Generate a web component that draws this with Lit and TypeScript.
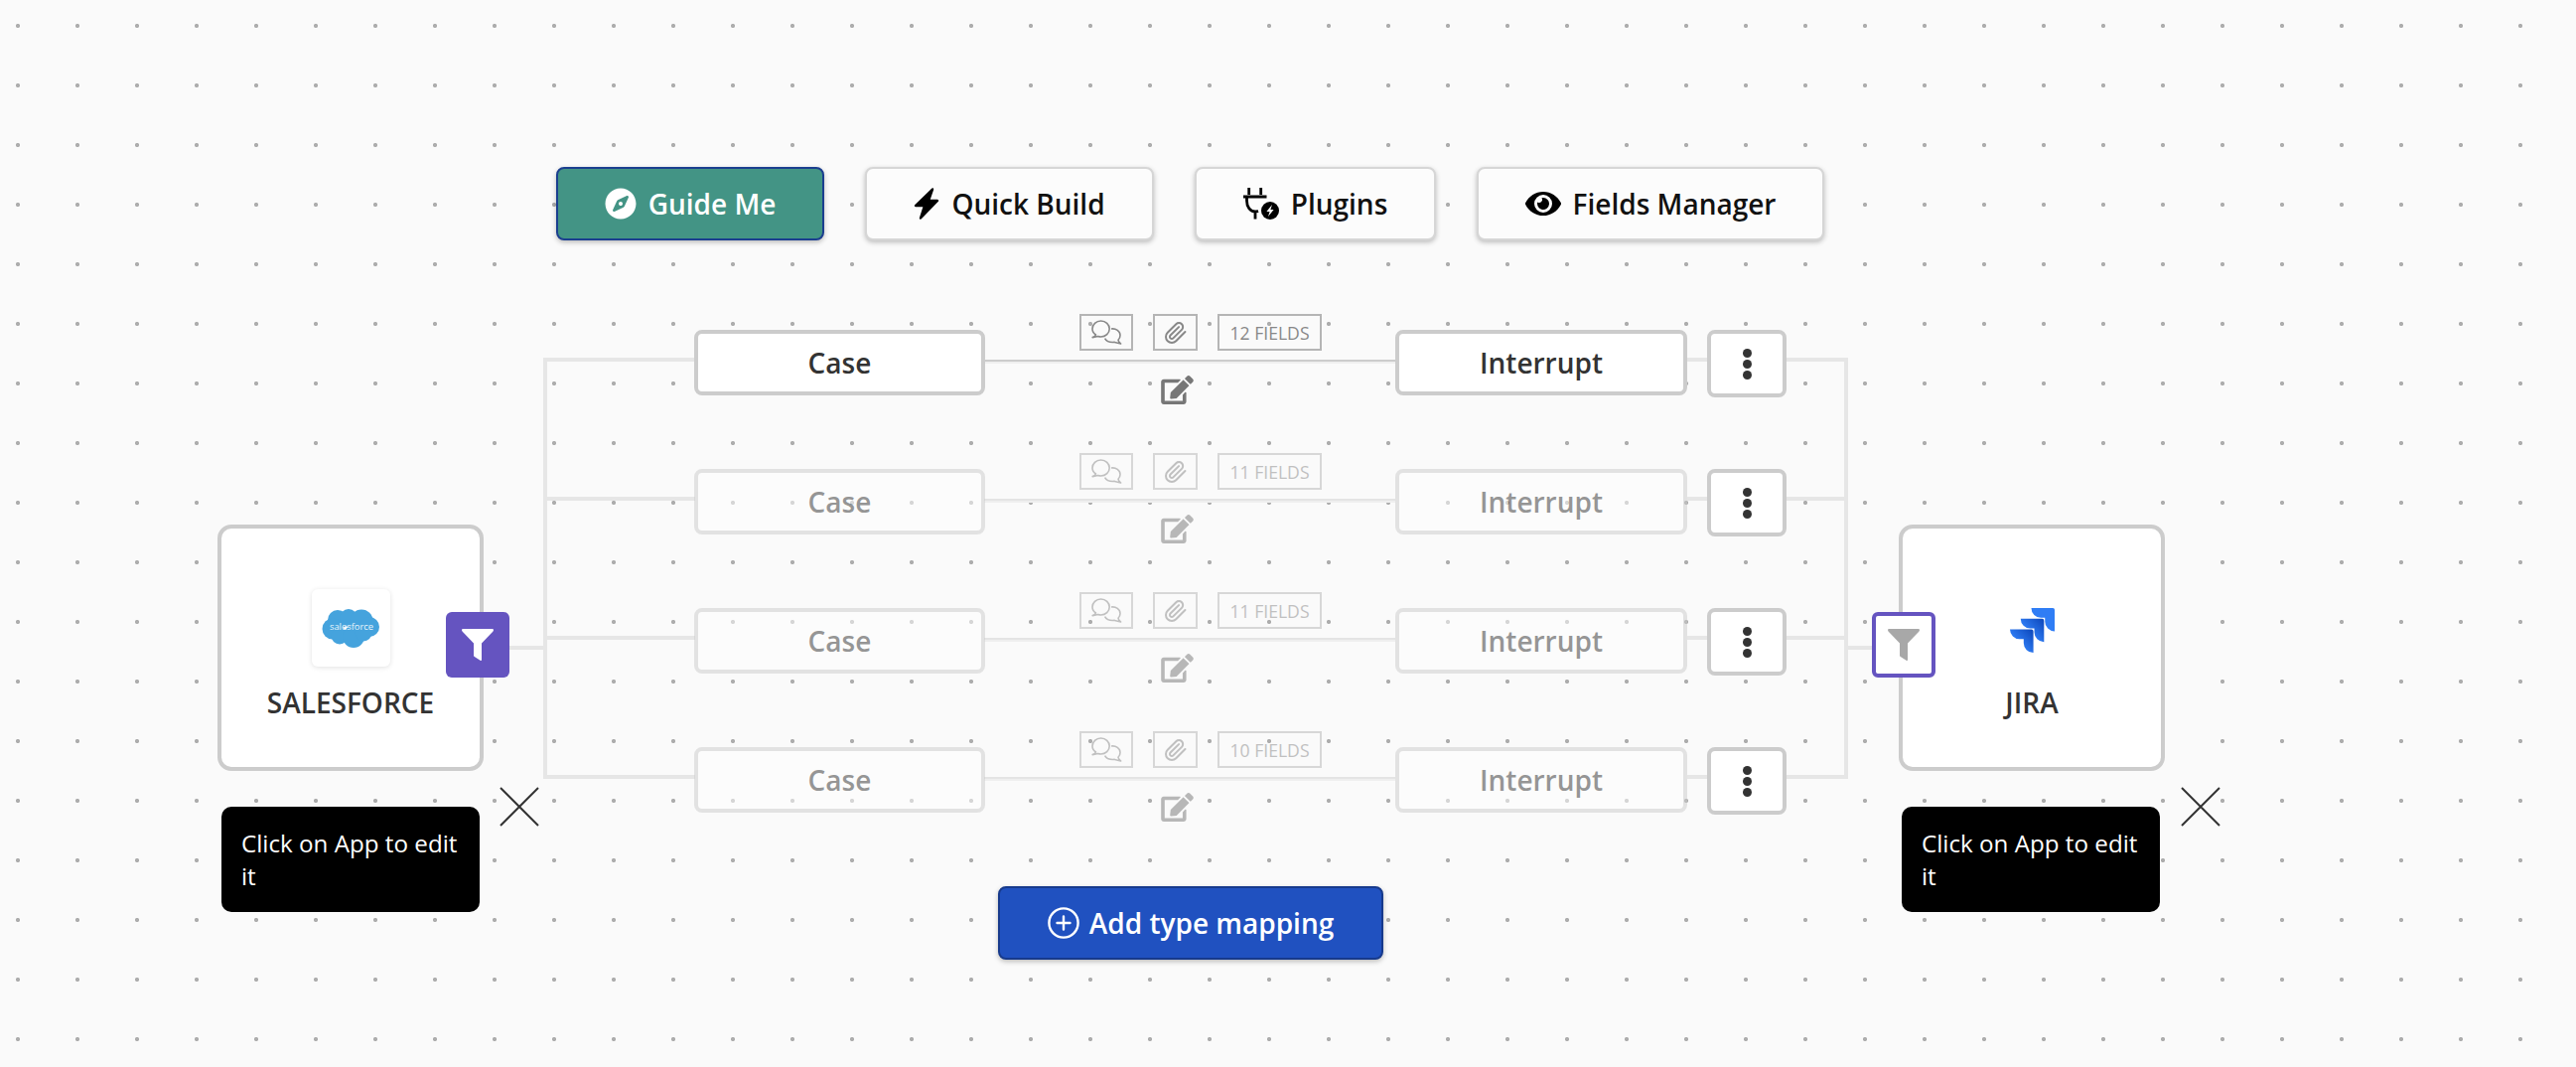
import { LitElement, html, css, svg } from "lit";
import { customElement } from "lit/decorators.js";

const rowsData = [
  { fields: 12, on: true },
  { fields: 11, on: false },
  { fields: 11, on: false },
  { fields: 10, on: false },
];
const ROW_TOP = 362;
const PITCH = 140;

const funnel = html`<svg class="funnel" viewBox="0 0 32 32"><path d="M1.5 0H30.5C32 0 32.4 1.4 31.5 2.4L20 14.5V31C20 32 19.4 32.2 18.6 31.8L12.8 28C12.2 27.6 12 27 12 26.4V14.5L.5 2.4C-.4 1.4 0 0 1.5 0Z" fill="currentColor"/></svg>`;
const cross = html`<svg class="cross" viewBox="0 0 40 40"><path d="M1 1L39 39M39 1L1 39" stroke="#333" stroke-width="2" fill="none"/></svg>`;
const chat = html`<svg class="chat" viewBox="0 0 31 25" fill="none" stroke="currentColor" stroke-width="1.6" stroke-linejoin="round"><path d="M4.5 15C2.2 13.5 1 11.4 1 9C1 4.6 4.8 1 9.6 1S18.2 4.6 18.2 9S14.4 17 9.6 17C8.6 17 7.6 16.8 6.6 16.5L1.2 17.6C2.8 17 4 16 4.5 15Z"/><path d="M20 9C24.6 8.4 29 11 29 15.4C29 17.4 28.2 19 27 20.2C27.2 21.6 28 23 29.6 24L23.4 22.4C20 22.8 15.5 22 13.6 18.6"/></svg>`;
const clip = html`<svg class="clip" viewBox="0 0 24 24" fill="none" stroke="currentColor" stroke-width="2" stroke-linecap="round" stroke-linejoin="round"><path d="m21.44 11.05-9.19 9.19a6 6 0 0 1-8.49-8.49l8.57-8.57A4 4 0 1 1 18 8.84l-8.59 8.57a2 2 0 0 1-2.83-2.83l8.49-8.48"/></svg>`;
const edit = html`<svg class="edit" viewBox="0 0 576 512"><path fill="currentColor" d="M402.6 83.2l90.2 90.2c3.8 3.8 3.8 10 0 13.8L274.4 405.6l-92.8 10.3c-12.4 1.4-22.9-9.1-21.5-21.5l10.3-92.8L388.8 83.2c3.8-3.8 10-3.8 13.8 0zm162-22.9l-48.8-48.8c-15.2-15.2-39.9-15.2-55.2 0l-35.4 35.4c-3.8 3.8-3.8 10 0 13.8l90.2 90.2c3.8 3.8 10 3.8 13.8 0l35.4-35.4c15.2-15.3 15.2-40 0-55.2zM384 346.2V448H64V128h229.8c3.2 0 6.2-1.3 8.5-3.5l40-40c7.6-7.6 2.2-20.5-8.5-20.5H48C21.5 64 0 85.5 0 112v352c0 26.5 21.5 48 48 48h352c26.5 0 48-21.5 48-48V306.2c0-10.7-12.9-16-20.5-8.5l-40 40c-2.2 2.3-3.5 5.3-3.5 8.5z"/></svg>`;

const compass = html`<svg class="ic" viewBox="0 0 496 512"><path fill="#fff" d="M225.38 233.37c-12.5 12.5-12.5 32.76 0 45.25 12.49 12.5 32.76 12.5 45.25 0 12.5-12.5 12.5-32.76 0-45.25-12.5-12.49-32.76-12.49-45.25 0zM248 8C111 8 0 119 0 256s111 248 248 248 248-111 248-248S385 8 248 8zm126.14 148.05L308.17 300.4a31.938 31.938 0 0 1-15.77 15.77l-144.34 65.97c-16.65 7.61-33.81-9.55-26.2-26.2l65.98-144.35a31.938 31.938 0 0 1 15.77-15.77l144.34-65.97c16.65-7.6 33.8 9.55 26.19 26.2z"/></svg>`;
const bolt = html`<svg class="ic bolt" viewBox="0 0 26 32"><path d="M19 1.5L2 18H11L7 30.5L24 13H15L19 1.5Z" fill="#000" stroke="#000" stroke-width="2.4" stroke-linejoin="round"/></svg>`;
const plug = html`<svg class="ic plug" viewBox="0 0 36 32"><path d="M5.7 0V7M17.7 0V7M0 9H23.5M3.5 9V13C3.5 19.5 7 24 12 24C13 24 14 23.8 15 23.4M12 24V31.5" fill="none" stroke="#000" stroke-width="2.8"/><circle cx="27" cy="23" r="9" fill="#000"/><path d="M29 17L23.4 24H26.6L25 29L30.6 22H27.4Z" fill="#fff"/></svg>`;
const eye = html`<svg class="ic eye" viewBox="0 0 576 512"><path fill="#000" d="M572.52 241.4C518.29 135.59 410.93 64 288 64S57.68 135.64 3.48 241.41a32.35 32.35 0 0 0 0 29.19C57.71 376.41 165.07 448 288 448s230.32-71.64 284.52-177.41a32.35 32.35 0 0 0 0-29.19zM288 400a144 144 0 1 1 144-144 143.93 143.93 0 0 1-144 144zm0-240a95.31 95.31 0 0 0-25.31 3.79 47.85 47.85 0 0 1-66.9 66.9A95.78 95.78 0 1 0 288 160z"/></svg>`;
const plusCircle = html`<svg class="ic plus" viewBox="0 0 32 32" fill="none" stroke="#fff" stroke-width="2.4"><circle cx="16" cy="16" r="14.6"/><path d="M16 9.5V22.5M9.5 16H22.5" stroke-linecap="round"/></svg>`;

const sfLogo = html`<svg class="sf" viewBox="0 0 58 40"><g fill="#45a3dd"><circle cx="16" cy="12" r="10"/><circle cx="27" cy="10" r="9"/><circle cx="40" cy="13" r="11.5"/><circle cx="48" cy="19" r="10"/><circle cx="11" cy="21" r="10.5"/><circle cx="18" cy="28" r="8.5"/><circle cx="32" cy="29" r="11"/><circle cx="42" cy="25" r="8.5"/></g><text x="30" y="22" class="sf-text" text-anchor="middle">salesforce</text></svg>`;
const jiraLogo = html`<svg class="jira" viewBox="0 0 24 24"><defs><linearGradient id="jg" x1="1" y1="0" x2="0.35" y2="0.6"><stop offset="0" stop-color="#0b45b8"/><stop offset="1" stop-color="#2f7df5"/></linearGradient></defs><path fill="url(#jg)" d="M11.571 11.513H0a5.218 5.218 0 0 0 5.232 5.215h2.13v2.057A5.215 5.215 0 0 0 12.575 24V12.518a1.005 1.005 0 0 0-1.005-1.005z"/><path fill="url(#jg)" d="M17.294 5.757H5.736a5.215 5.215 0 0 0 5.215 5.214h2.129v2.058a5.218 5.218 0 0 0 5.215 5.214V6.758a1.001 1.001 0 0 0-1.001-1.001z"/><path fill="#2f7df5" d="M23.013 0H11.455a5.215 5.215 0 0 0 5.215 5.215h2.129v2.057A5.215 5.215 0 0 0 24 12.483V1.005A1.001 1.001 0 0 0 23.013 0Z"/></svg>`;

@customElement("app-root")
export class AppRoot extends LitElement {
  static styles = css`
    :host {
      display: block;
      position: relative;
      box-sizing: border-box;
      height: 1074px;
      padding-top: 168px;
      overflow: hidden;
      font-family: "Open Sans", "Liberation Sans", sans-serif;
      color: #333;
      background-color: #fafafa;
      background-image: radial-gradient(circle at center, #adadad 0, #adadad 1.8px, transparent 2.4px);
      background-size: 60px 60px;
      background-position: -12px -4px;
    }
    .wires { position: absolute; left: 0; top: 0; width: 2594px; height: 1074px; }
    .toolbar { position: relative; display: flex; gap: 41px; padding-left: 560px; }
    .tool {
      box-sizing: border-box;
      height: 74px;
      display: flex;
      align-items: center;
      justify-content: center;
      gap: 12px;
      border: 2px solid #d6d6d6;
      border-radius: 8px;
      background: #fcfcfc;
      box-shadow: 0 2px 5px rgba(0,0,0,.25);
      color: #111;
      font-size: 28px;
      font-weight: 600;
    }
    .tool.guide { width: 270px; background: #439485; border-color: #1b3f8f; color: #fff; }
    .tool.quick { width: 291px; }
    .tool.plugins { width: 243px; }
    .tool.manager { width: 350px; }
    .ic { width: 32px; height: 32px; flex: none; }
    .bolt { width: 26px; }
    .plug { width: 36px; }
    .eye { width: 36px; }
    .diagram { position: relative; display: flex; margin-top: 74px; padding-left: 219px; align-items: flex-start; }
    .app-col { width: 268px; flex: none; margin-top: 212px; }
    .app-col.right { margin-left: 113px; }
    .card {
      position: relative;
      box-sizing: border-box;
      height: 248px;
      border: 4px solid #ccc;
      border-radius: 14px;
      background: #fff;
      display: flex;
      flex-direction: column;
      align-items: center;
    }
    .logo {
      box-sizing: border-box;
      width: 79px;
      height: 78px;
      margin-top: 61px;
      display: flex;
      align-items: center;
      justify-content: center;
      background: #fff;
      border-radius: 6px;
      box-shadow: 0 1px 5px rgba(0,0,0,.12);
    }
    .logo.bare { box-shadow: none; }
    .sf { width: 58px; height: 40px; }
    .sf-text { font-family: "Open Sans", sans-serif; font-size: 9.4px; fill: #e8f4fb; }
    .jira { width: 45px; height: 45px; margin-top: 5px; margin-left: 1px; }
    .app-name { margin-top: 17px; font-size: 28px; line-height: 38px; font-weight: 600; color: #333; }
    .filter {
      position: absolute;
      top: 84px;
      box-sizing: border-box;
      width: 64px;
      height: 66px;
      border-radius: 6px;
      display: flex;
      align-items: center;
      justify-content: center;
    }
    .filter.solid { left: 226px; background: #6554c0; color: #fff; }
    .filter.outline { left: -31px; background: #fff; border: 4px solid #6554c0; color: #a8a8a8; }
    .funnel { width: 32px; height: 32px; }
    .cross { position: absolute; left: 280px; top: 260px; width: 40px; height: 40px; }
    .tip {
      box-sizing: border-box;
      width: 260px;
      height: 106px;
      margin: 36px 0 0 4px;
      padding: 20px 20px;
      border-radius: 10px;
      background: #000;
      color: #fff;
      font-size: 24.2px;
      line-height: 33px;
    }
    .right .tip { margin-left: 3px; }
    .rows { margin-left: 212px; flex: none; width: 1100px; }
    .row { display: flex; height: 140px; align-items: flex-start; }
    .node {
      box-sizing: border-box;
      height: 66px;
      margin-top: 16px;
      border: 4px solid #ccc;
      border-radius: 8px;
      background: #fff;
      display: flex;
      align-items: center;
      justify-content: center;
      font-size: 28px;
      font-weight: 600;
      color: #333;
      flex: none;
    }
    .case { width: 293px; }
    .int { width: 294px; }
    .mid { width: 413px; flex: none; padding-left: 95px; box-sizing: border-box; color: #777; }
    .faded { opacity: .5; }
    .badges { display: flex; gap: 20px; }
    .badge {
      box-sizing: border-box;
      height: 37px;
      border: 2px solid #b5b5b5;
      display: flex;
      align-items: center;
      justify-content: center;
      font-size: 17.6px;
      color: #888;
    }
    .b-chat { width: 54px; }
    .b-clip { width: 45px; }
    .b-fields { width: 105px; }
    .chat { width: 31px; height: 25px; }
    .clip { width: 24px; height: 24px; }
    .edit { display: block; width: 33px; height: 29px; margin: 25px 0 0 82px; }
    .kebab {
      box-sizing: border-box;
      width: 80px;
      height: 68px;
      margin: 16px 0 0 20px;
      border: 4px solid #ccc;
      border-radius: 8px;
      background: #fff;
      display: flex;
      flex-direction: column;
      align-items: center;
      justify-content: center;
      gap: 2px;
      flex: none;
    }
    .kebab i { width: 9px; height: 9px; border-radius: 50%; background: #333; display: block; }
    .add {
      box-sizing: border-box;
      width: 388px;
      height: 74px;
      margin: 16px 0 0 306px;
      display: flex;
      align-items: center;
      justify-content: center;
      gap: 10px;
      background: #2051c0;
      border: 2px solid #173a8c;
      border-radius: 8px;
      box-shadow: 0 2px 5px rgba(0,0,0,.25);
      color: #fff;
      font-size: 28px;
      font-weight: 600;
    }
  `;

  private wires() {
    const last = ROW_TOP + PITCH * 3;
    return html`<svg class="wires" viewBox="0 0 2594 1074" fill="none">
      ${rowsData.map((r, i) => {
        const y = ROW_TOP + PITCH * i;
        return svg`
          <path d="M991 ${y + 2}H1405" stroke="#efefef" stroke-width="4"/>
          <path d="M991 ${y + 1}H1405" stroke=${r.on ? "#ccc" : "#e4e4e4"} stroke-width="2"/>
          <path d="M549 ${y}H700M1699 ${y}H1859" stroke="#e6e6e6" stroke-width="4"/>`;
      })}
      <path d="M549 ${ROW_TOP}V${last}M1859 ${ROW_TOP}V${last}" stroke="#e6e6e6" stroke-width="4" stroke-linecap="square"/>
      <path d="M513 652H549M1859 652H1885" stroke="#e6e6e6" stroke-width="4"/>
    </svg>`;
  }

  private app(name: string, logo: unknown, bare: boolean, side: string) {
    return html`<div class="app-col ${side}">
      <div class="card">
        <div class="logo ${bare ? "bare" : ""}">${logo}</div>
        <div class="app-name">${name}</div>
        <div class="filter ${bare ? "outline" : "solid"}">${funnel}</div>
        ${cross}
      </div>
      <div class="tip">Click on App to edit it</div>
    </div>`;
  }

  render() {
    return html`
      ${this.wires()}
      <div class="toolbar">
        <div class="tool guide">${compass}<span>Guide Me</span></div>
        <div class="tool quick">${bolt}<span>Quick Build</span></div>
        <div class="tool plugins">${plug}<span>Plugins</span></div>
        <div class="tool manager">${eye}<span>Fields Manager</span></div>
      </div>
      <div class="diagram">
        ${this.app("SALESFORCE", sfLogo, false, "left")}
        <div class="rows">
          ${rowsData.map(
            (r) => html`<div class="row">
              <div class="node case ${r.on ? "" : "faded"}">Case</div>
              <div class="mid ${r.on ? "" : "faded"}">
                <div class="badges">
                  <div class="badge b-chat">${chat}</div>
                  <div class="badge b-clip">${clip}</div>
                  <div class="badge b-fields">${r.fields} FIELDS</div>
                </div>
                ${edit}
              </div>
              <div class="node int ${r.on ? "" : "faded"}">Interrupt</div>
              <div class="kebab"><i></i><i></i><i></i></div>
            </div>`
          )}
          <div class="add">${plusCircle}<span>Add type mapping</span></div>
        </div>
        ${this.app("JIRA", jiraLogo, true, "right")}
      </div>
    `;
  }
}
